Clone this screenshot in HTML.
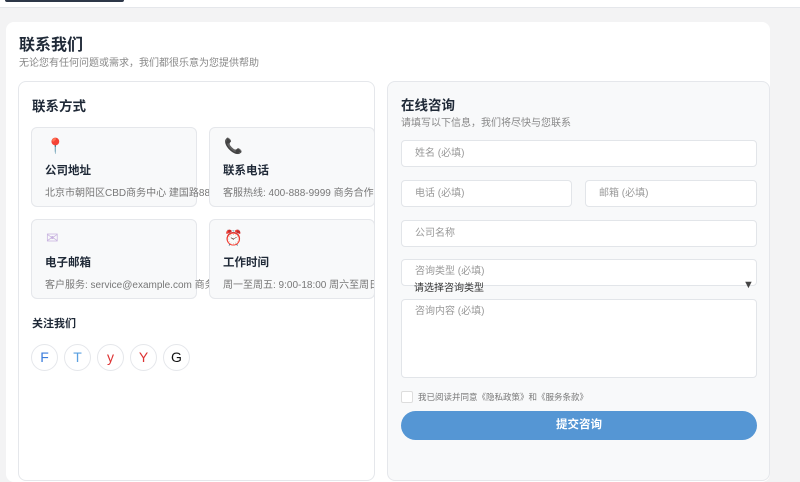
<!DOCTYPE html>
<html><head><meta charset="utf-8"><style>
*{box-sizing:border-box;margin:0;padding:0}
body{width:800px;height:469px;overflow:hidden;background:#f3f3f4;font-family:"Liberation Sans","Noto Sans CJK SC",sans-serif;position:relative;color:#2d3748}
.a{position:absolute}
.top{left:0;top:0;width:800px;height:8px;background:#fff;border-bottom:1px solid #e5e7eb}
.bar{left:5px;top:0;width:119px;height:2px;background:#2d3748;border-radius:0 0 3px 3px}
.main{left:6px;top:22px;width:764px;height:460px;background:#fff;border-radius:8px}
.lp{left:18px;top:81px;width:357px;height:400px;border:1px solid #e5e7eb;border-radius:8px;background:#fff;overflow:hidden}
.rp{left:387px;top:81px;width:383px;height:400px;border:1px solid #e5e7eb;border-radius:8px;background:#f8f9fa}
.card{width:166px;height:80px;background:#f8f9fa;border:1px solid #e5e7eb;border-radius:6px;white-space:nowrap}
.card .t{position:absolute;left:13px;top:34px;font-size:11.5px;font-weight:bold;color:#1f2937}
.card .d{position:absolute;left:13px;top:56px;font-size:10px;color:#777}
.card .i{position:absolute;left:14px;top:9px;font-size:15px}
.in{background:#fff;border:1px solid #e2e5e9;border-radius:4px;font-size:10px;color:#999;padding-left:13px;line-height:26px}
.soc{width:27px;height:27px;border:1px solid #e5e7eb;border-radius:50%;top:262px;text-align:center;line-height:25px;font-size:14px;background:#fff}
</style></head><body>
<div class="a top"></div><div class="a bar"></div>
<div class="a main"></div>
<div class="a" style="left:19px;top:31px;font-size:16px;font-weight:bold;color:#1f2937">联系我们</div>
<div class="a" style="left:19px;top:54px;font-size:10px;color:#888">无论您有任何问题或需求，我们都很乐意为您提供帮助</div>
<div class="a lp">
<div class="a" style="left:13px;top:13px;font-size:13.5px;font-weight:bold;color:#1f2937">联系方式</div>
<div class="a card" style="left:12px;top:45px"><span class="i" style="color:#e0446b">📍</span><span class="t">公司地址</span><span class="d">北京市朝阳区CBD商务中心 建国路88号玥</span></div>
<div class="a card" style="left:12px;top:137px"><span class="i" style="color:#c9b4e0">✉</span><span class="t">电子邮箱</span><span class="d">客户服务: service@example.com 商务合</span></div>
<div class="a card" style="left:190px;top:45px"><span class="i" style="color:#c0396b">📞</span><span class="t">联系电话</span><span class="d">客服热线: 400-888-9999 商务合作: 010-8</span></div>
<div class="a card" style="left:190px;top:137px"><span class="i" style="color:#e04050">⏰</span><span class="t">工作时间</span><span class="d">周一至周五: 9:00-18:00 周六至周日: 10:0</span></div>
<div class="a" style="left:13px;top:233px;font-size:11px;font-weight:bold;color:#1f2937">关注我们</div>
<div class="a soc" style="left:12px;color:#3b7ddd">F</div>
<div class="a soc" style="left:45px;color:#5aa0e0">T</div>
<div class="a soc" style="left:78px;color:#d33">y</div>
<div class="a soc" style="left:111px;color:#d33">Y</div>
<div class="a soc" style="left:144px;color:#111">G</div>
</div>
<div class="a rp"></div>
<div class="a" style="left:401px;top:94px;font-size:13.5px;font-weight:bold;color:#1f2937">在线咨询</div>
<div class="a" style="left:401px;top:114px;font-size:10px;color:#888">请填写以下信息，我们将尽快与您联系</div>
<div class="a in" style="left:401px;top:140px;width:356px;height:27px">姓名 (必填)</div>
<div class="a in" style="left:401px;top:180px;width:171px;height:27px">电话 (必填)</div>
<div class="a in" style="left:585px;top:180px;width:172px;height:27px">邮箱 (必填)</div>
<div class="a in" style="left:401px;top:220px;width:356px;height:27px">公司名称</div>
<div class="a in" style="left:401px;top:259px;width:356px;height:27px;line-height:24px">咨询类型 (必填)</div>
<div class="a" style="left:414px;top:279px;font-size:10px;color:#333">请选择咨询类型</div>
<div class="a" style="left:743px;top:279px;font-size:11px;color:#444">▼</div>
<div class="a in" style="left:401px;top:299px;width:356px;height:79px;line-height:24px">咨询内容 (必填)</div>
<div class="a" style="left:401px;top:391px;width:12px;height:12px;border:1px solid #ddd;background:#fff;border-radius:2px"></div>
<div class="a" style="left:418px;top:391px;font-size:8.5px;color:#777">我已阅读并同意《隐私政策》和《服务条款》</div>
<div class="a" style="left:401px;top:411px;width:356px;height:29px;border-radius:15px;background:#5596d4;color:#fff;font-size:11.5px;font-weight:bold;text-align:center;line-height:29px">提交咨询</div>
</body></html>
